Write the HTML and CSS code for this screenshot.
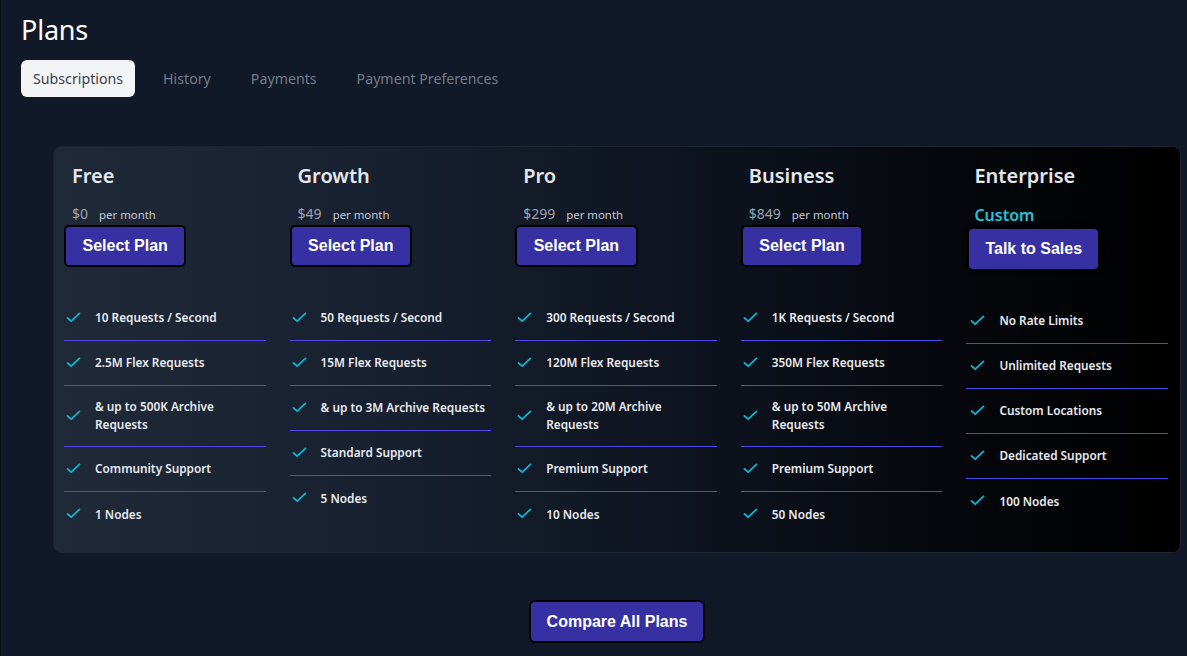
FILE: index.html
```html
<!DOCTYPE html>
<html lang="en">
<head>
<meta charset="utf-8">
<title>Plans</title>
<link rel="stylesheet" href="styles.css">
</head>
<body>
<div class="page">
  <h1 class="page-title">Plans</h1>
  <nav class="tabs">
    <a class="tab tab-active">Subscriptions</a>
    <a class="tab">History</a>
    <a class="tab">Payments</a>
    <a class="tab">Payment Preferences</a>
  </nav>

  <section class="plans-card">
    <div class="plan">
      <div class="plan-head">
        <h2 class="plan-name">Free</h2>
        <div class="plan-price"><span class="amount">$0</span><span class="period">per month</span></div>
      </div>
      <button class="btn">Select Plan</button>
      <ul class="features">
        <li class="feature"><svg class="check" viewBox="0 0 16 12"><path d="M1.5 6.5 L5.5 10 L14.5 1.5"/></svg><span>10 Requests / Second</span></li>
        <li class="feature"><svg class="check" viewBox="0 0 16 12"><path d="M1.5 6.5 L5.5 10 L14.5 1.5"/></svg><span>2.5M Flex Requests</span></li>
        <li class="feature"><svg class="check" viewBox="0 0 16 12"><path d="M1.5 6.5 L5.5 10 L14.5 1.5"/></svg><span>&amp; up to 500K Archive Requests</span></li>
        <li class="feature"><svg class="check" viewBox="0 0 16 12"><path d="M1.5 6.5 L5.5 10 L14.5 1.5"/></svg><span>Community Support</span></li>
        <li class="feature"><svg class="check" viewBox="0 0 16 12"><path d="M1.5 6.5 L5.5 10 L14.5 1.5"/></svg><span>1 Nodes</span></li>
      </ul>
    </div>

    <div class="plan">
      <div class="plan-head">
        <h2 class="plan-name">Growth</h2>
        <div class="plan-price"><span class="amount">$49</span><span class="period">per month</span></div>
      </div>
      <button class="btn">Select Plan</button>
      <ul class="features">
        <li class="feature"><svg class="check" viewBox="0 0 16 12"><path d="M1.5 6.5 L5.5 10 L14.5 1.5"/></svg><span>50 Requests / Second</span></li>
        <li class="feature"><svg class="check" viewBox="0 0 16 12"><path d="M1.5 6.5 L5.5 10 L14.5 1.5"/></svg><span>15M Flex Requests</span></li>
        <li class="feature"><svg class="check" viewBox="0 0 16 12"><path d="M1.5 6.5 L5.5 10 L14.5 1.5"/></svg><span>&amp; up to 3M Archive Requests</span></li>
        <li class="feature"><svg class="check" viewBox="0 0 16 12"><path d="M1.5 6.5 L5.5 10 L14.5 1.5"/></svg><span>Standard Support</span></li>
        <li class="feature"><svg class="check" viewBox="0 0 16 12"><path d="M1.5 6.5 L5.5 10 L14.5 1.5"/></svg><span>5 Nodes</span></li>
      </ul>
    </div>

    <div class="plan">
      <div class="plan-head">
        <h2 class="plan-name">Pro</h2>
        <div class="plan-price"><span class="amount">$299</span><span class="period">per month</span></div>
      </div>
      <button class="btn">Select Plan</button>
      <ul class="features">
        <li class="feature"><svg class="check" viewBox="0 0 16 12"><path d="M1.5 6.5 L5.5 10 L14.5 1.5"/></svg><span>300 Requests / Second</span></li>
        <li class="feature"><svg class="check" viewBox="0 0 16 12"><path d="M1.5 6.5 L5.5 10 L14.5 1.5"/></svg><span>120M Flex Requests</span></li>
        <li class="feature"><svg class="check" viewBox="0 0 16 12"><path d="M1.5 6.5 L5.5 10 L14.5 1.5"/></svg><span>&amp; up to 20M Archive Requests</span></li>
        <li class="feature"><svg class="check" viewBox="0 0 16 12"><path d="M1.5 6.5 L5.5 10 L14.5 1.5"/></svg><span>Premium Support</span></li>
        <li class="feature"><svg class="check" viewBox="0 0 16 12"><path d="M1.5 6.5 L5.5 10 L14.5 1.5"/></svg><span>10 Nodes</span></li>
      </ul>
    </div>

    <div class="plan">
      <div class="plan-head">
        <h2 class="plan-name">Business</h2>
        <div class="plan-price"><span class="amount">$849</span><span class="period">per month</span></div>
      </div>
      <button class="btn">Select Plan</button>
      <ul class="features">
        <li class="feature"><svg class="check" viewBox="0 0 16 12"><path d="M1.5 6.5 L5.5 10 L14.5 1.5"/></svg><span>1K Requests / Second</span></li>
        <li class="feature"><svg class="check" viewBox="0 0 16 12"><path d="M1.5 6.5 L5.5 10 L14.5 1.5"/></svg><span>350M Flex Requests</span></li>
        <li class="feature"><svg class="check" viewBox="0 0 16 12"><path d="M1.5 6.5 L5.5 10 L14.5 1.5"/></svg><span>&amp; up to 50M Archive Requests</span></li>
        <li class="feature"><svg class="check" viewBox="0 0 16 12"><path d="M1.5 6.5 L5.5 10 L14.5 1.5"/></svg><span>Premium Support</span></li>
        <li class="feature"><svg class="check" viewBox="0 0 16 12"><path d="M1.5 6.5 L5.5 10 L14.5 1.5"/></svg><span>50 Nodes</span></li>
      </ul>
    </div>

    <div class="plan plan-enterprise">
      <div class="plan-head">
        <h2 class="plan-name">Enterprise</h2>
        <div class="plan-custom">Custom</div>
      </div>
      <button class="btn btn-sales">Talk to Sales</button>
      <ul class="features">
        <li class="feature"><svg class="check" viewBox="0 0 16 12"><path d="M1.5 6.5 L5.5 10 L14.5 1.5"/></svg><span>No Rate Limits</span></li>
        <li class="feature"><svg class="check" viewBox="0 0 16 12"><path d="M1.5 6.5 L5.5 10 L14.5 1.5"/></svg><span>Unlimited Requests</span></li>
        <li class="feature"><svg class="check" viewBox="0 0 16 12"><path d="M1.5 6.5 L5.5 10 L14.5 1.5"/></svg><span>Custom Locations</span></li>
        <li class="feature"><svg class="check" viewBox="0 0 16 12"><path d="M1.5 6.5 L5.5 10 L14.5 1.5"/></svg><span>Dedicated Support</span></li>
        <li class="feature"><svg class="check" viewBox="0 0 16 12"><path d="M1.5 6.5 L5.5 10 L14.5 1.5"/></svg><span>100 Nodes</span></li>
      </ul>
    </div>
  </section>

  <div class="compare">
    <button class="btn btn-compare">Compare All Plans</button>
  </div>
</div>
</body>
</html>
```

FILE: styles.css
```css
* { box-sizing: border-box; }

html, body {
  margin: 0;
  padding: 0;
  background: #111827;
}

body {
  font-family: "Noto Sans", "Open Sans", sans-serif;
  color: #e5e7eb;
  border-left: 1px solid #0b0f18;
  min-height: 656px;
}

.page {
  padding: 12px 6px 0 20px;
}

.page-title {
  margin: 0;
  font-size: 27px;
  line-height: 36px;
  font-weight: 400;
  color: #ffffff;
  letter-spacing: -0.2px;
}

.tabs {
  display: flex;
  gap: 16px;
  margin-top: 12px;
}

.tab {
  display: block;
  padding: 0 12px;
  height: 37px;
  line-height: 38px;
  font-size: 14.2px;
  color: #737b8b;
  border-radius: 6px;
}

.tab-active {
  background: #f3f4f6;
  color: #374151;
}

.plans-card {
  margin: 49px 0 0 32px;
  padding: 12px 12px 15px 10px;
  display: grid;
  grid-template-columns: repeat(5, 1fr);
  column-gap: 24px;
  border: 1px solid #1c2331;
  border-radius: 8px;
  background: linear-gradient(90deg, #1f2937 0%, #172030 30%, #0e1420 55%, #05070c 80%, #000000 100%);
}

.plan {
  display: flex;
  flex-direction: column;
  align-items: flex-start;
}

.plan-head {
  padding-left: 8px;
}

.plan-name {
  margin: 5px 0 0 0;
  font-size: 20px;
  line-height: 24px;
  font-weight: 600;
  color: #e5e7eb;
}

.plan-price {
  margin-top: 16px;
  height: 20px;
  display: flex;
  align-items: baseline;
  gap: 11px;
}

.amount {
  font-size: 14px;
  color: #9ca3af;
}

.period {
  font-size: 11.4px;
  color: #c3c8d6;
}

.plan-custom {
  margin-top: 17px;
  font-size: 16px;
  line-height: 20px;
  font-weight: 600;
  color: #22c3dc;
}

.btn {
  font-family: "Liberation Sans", Arial, sans-serif;
  font-weight: 700;
  font-size: 16px;
  color: #ffffff;
  background: #3730a3;
  border: 2px solid #000000;
  border-radius: 5px;
  height: 42px;
  padding: 0 16.5px;
  margin-top: 1px;
  cursor: pointer;
}

.btn-sales {
  border: none;
  height: 40px;
  padding: 0 16px;
  margin: 4px 0 0 3px;
  border-radius: 4px;
  box-shadow: 0 0 4px 2px rgba(0, 0, 0, 0.9);
}

.features {
  list-style: none;
  margin: 29px 0 0 0;
  padding: 0;
  width: 100%;
}

.plan-enterprise .features {
  margin-top: 30px;
}

.feature {
  display: flex;
  align-items: center;
  gap: 14px;
  min-height: 45px;
  padding: 11px 0 13px 2px;
  font-size: 11.8px;
  line-height: 18px;
  font-weight: 600;
  color: #e8eaee;
  border-bottom: 1px solid #4f46e5;
}

.plan-enterprise .feature {
  padding-left: 4px;
}

.feature:last-child {
  border-bottom: none;
}

.check {
  flex: none;
  width: 15px;
  height: 11px;
  fill: none;
  stroke: #0fb4d0;
  stroke-width: 2;
  stroke-linecap: round;
  stroke-linejoin: round;
}

.compare {
  display: flex;
  justify-content: center;
  padding-left: 32px;
  margin-top: 47px;
}

.btn-compare {
  height: 43px;
  margin: 0;
  padding: 0 16px;
  border-radius: 6px;
}
```
